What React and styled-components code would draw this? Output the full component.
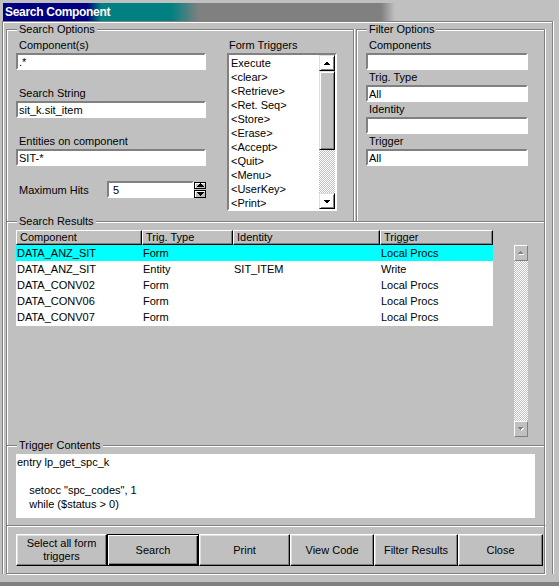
import styled, { createGlobalStyle, css } from "styled-components";

const GlobalStyle = createGlobalStyle`
  * { box-sizing: border-box; }
  html, body { margin: 0; padding: 0; background: #c0c0c0; }
  body {
    font-family: "Liberation Sans", Arial, sans-serif;
    font-size: 11px;
    color: #000;
  }
`;

const raised = css`
  border: 1px solid;
  border-color: #dfdfdf #000 #000 #dfdfdf;
  box-shadow: inset 1px 1px 0 #fff, inset -1px -1px 0 #808080;
`;

const sunken = css`
  border: 2px solid;
  border-color: #808080 #fff #fff #808080;
`;

const dither = css`
  background: repeating-conic-gradient(#fff 0% 25%, #c0c0c0 0% 50%) 0 0 / 2px 2px;
`;

const Window = styled.div`
  width: 559px;
  height: 586px;
  background: #c0c0c0;
  display: flex;
  flex-direction: column;
  overflow: hidden;
`;

const TitleBar = styled.div`
  margin: 3px 0 0 3px;
  width: 392px;
  height: 18px;
  padding-left: 2px;
  background: linear-gradient(
    to right,
    #000080 0 84px,
    #008080 98px 168px,
    #808080 196px 378px,
    #c0c0c0 392px
  );
  color: #fff;
  font-weight: bold;
  font-size: 12px;
  line-height: 19px;
  letter-spacing: -0.3px;
  white-space: nowrap;
`;

const Client = styled.div`
  margin-left: 2px;
  width: 551px;
  border: 1px solid #808080;
  border-bottom: 0;
  box-shadow: inset 1px 1px 0 #fff, 1px 0 0 #fff;
  padding: 1px 7px 0 3px;
`;

const TopRow = styled.div`
  display: flex;
  gap: 2px;
`;

const Group = styled.fieldset`
  margin: ${(p) => (p.$overlap ? "-6px 0 0" : "0")};
  padding: 0;
  min-width: 0;
  width: ${(p) => p.$w}px;
  height: ${(p) => p.$h}px;
  border: 1px solid #808080;
  border-bottom: 0;
  box-shadow: inset 1px 1px 0 #fff, 1px 0 0 #fff;
`;

const Legend = styled.legend`
  margin-left: 10px;
  padding: 0 2px;
  line-height: 13px;
  background: #c0c0c0;
  white-space: nowrap;
`;

const Body = styled.div`
  padding: ${(p) => p.$pt}px 0 0 9px;
  display: flex;
  gap: ${(p) => p.$gap || 0}px;
`;

const Column = styled.div`
  width: ${(p) => p.$w}px;
  display: flex;
  flex-direction: column;
`;

const Label = styled.div`
  height: 13px;
  line-height: 13px;
  padding-left: ${(p) => (p.$pl === undefined ? 3 : p.$pl)}px;
  margin-top: ${(p) => p.$mt || 0}px;
  margin-bottom: 1px;
  white-space: nowrap;
`;

const Input = styled.input`
  display: block;
  width: ${(p) => p.$w || 190}px;
  height: 17px;
  ${sunken}
  background: #fff;
  font: inherit;
  color: #000;
  padding: 0 0 0 ${(p) => p.$pl || 1}px;
  margin: 0;
  outline: none;
`;

const HitsRow = styled.div`
  display: flex;
  align-items: center;
  margin-top: 15px;
  height: 17px;
`;

const HitsLabel = styled.span`
  width: 91px;
  padding-left: 3px;
  white-space: nowrap;
`;

const Spinner = styled.div`
  width: 12px;
  height: 16px;
  display: flex;
  flex-direction: column;
  gap: 1px;
`;

const SpinBtn = styled.div`
  flex: 1;
  border: 1px solid #000;
  background: #c0c0c0;
  box-shadow: inset 1px 1px 0 #fff;
  display: flex;
  align-items: center;
  justify-content: center;
`;

const ListBox = styled.div`
  width: 110px;
  height: 158px;
  ${sunken}
  background: #fff;
  display: flex;
  overflow: hidden;
`;

const ListItems = styled.div`
  flex: 1;
  padding: 1px 0 0 2px;
  line-height: 14px;
  overflow: hidden;
  white-space: nowrap;
`;

const VScroll = styled.div`
  width: ${(p) => p.$w}px;
  height: ${(p) => (p.$h ? `${p.$h}px` : "auto")};
  margin: ${(p) => p.$m || 0};
  flex-shrink: 0;
  display: flex;
  flex-direction: column;
`;

const ScrollBtn = styled.div`
  height: 16px;
  flex-shrink: 0;
  display: flex;
  align-items: center;
  justify-content: center;
  ${(p) =>
    p.$disabled
      ? css`
          border: 1px solid;
          border-color: #fff #808080 #808080 #fff;
          background: #c0c0c0;
        `
      : raised}
`;

const Thumb = styled.div`
  height: ${(p) => p.$h}px;
  flex-shrink: 0;
  background: #c0c0c0;
  ${raised}
`;

const Track = styled.div`
  flex: 1;
  ${dither}
`;

const cols = "126px 91px 147px 113px";

const Table = styled.div`
  width: 477px;
`;

const HeadRow = styled.div`
  display: grid;
  grid-template-columns: ${cols};
  height: 15px;
`;

const HeadCell = styled.div`
  border: 1px solid;
  border-color: #fff #000 #000 #fff;
  box-shadow: inset -1px -1px 0 #808080;
  padding-left: 3px;
  line-height: 13px;
  white-space: nowrap;
`;

const Rows = styled.div`
  background: #fff;
  height: 81px;
`;

const Row = styled.div`
  display: grid;
  grid-template-columns: ${cols};
  height: 16px;
  line-height: 16px;
  background: ${(p) => (p.$sel ? "#00ffff" : "transparent")};
`;

const Cell = styled.div`
  padding-left: 1px;
  white-space: nowrap;
  overflow: hidden;
`;

const CodeBox = styled.div`
  width: 519px;
  height: 64px;
  background: #fff;
  padding: 1px 0 0 1px;
  line-height: 14px;
  white-space: pre;
`;

const ButtonBar = styled.div`
  height: 49px;
  border: 1px solid #808080;
  box-shadow: inset 1px 1px 0 #fff, 1px 1px 0 #fff;
  padding: 8px 0 0 9px;
  display: flex;
`;

const Button = styled.button`
  width: ${(p) => p.$w}px;
  height: 32px;
  margin: 0;
  padding: 0;
  font: inherit;
  line-height: 13px;
  color: #000;
  background: #c0c0c0;
  border: 1px solid;
  border-color: #fff #000 #000 #fff;
  box-shadow: inset -1px -1px 0 #808080, inset 1px 1px 0 #dfdfdf;
  ${(p) =>
    p.$default &&
    css`
      border-color: #000;
      box-shadow: inset 1px 1px 0 #fff, inset -1px -1px 0 #000,
        inset -2px -2px 0 #808080;
    `}
`;

const BottomBand = styled.div`
  margin-top: auto;
  height: 4px;
  background: #808080;
`;

const Arrow = ({ down, disabled }) => (
  <svg width="8" height="5" viewBox="0 0 8 5" shapeRendering="crispEdges">
    {disabled && (
      <polygon
        points={down ? "2,1 7,1 4.5,4" : "2,4 7,4 4.5,1"}
        fill="#fff"
      />
    )}
    <polygon
      points={
        disabled
          ? down
            ? "1,0 6,0 3.5,3"
            : "1,3 6,3 3.5,0"
          : down
          ? "0,1 7,1 3.5,4.5"
          : "0,4 7,4 3.5,0.5"
      }
      fill={disabled ? "#808080" : "#000"}
    />
  </svg>
);

const SpinArrow = ({ down }) => (
  <svg width="7" height="4" viewBox="0 0 7 4" shapeRendering="crispEdges">
    <polygon points={down ? "0,0 7,0 3.5,4" : "0,4 7,4 3.5,0"} fill="#000" />
  </svg>
);

const triggers = [
  "Execute",
  "<clear>",
  "<Retrieve>",
  "<Ret. Seq>",
  "<Store>",
  "<Erase>",
  "<Accept>",
  "<Quit>",
  "<Menu>",
  "<UserKey>",
  "<Print>",
];

const results = [
  ["DATA_ANZ_SIT", "Form", "", "Local Procs"],
  ["DATA_ANZ_SIT", "Entity", "SIT_ITEM", "Write"],
  ["DATA_CONV02", "Form", "", "Local Procs"],
  ["DATA_CONV06", "Form", "", "Local Procs"],
  ["DATA_CONV07", "Form", "", "Local Procs"],
];

const code = [
  "entry lp_get_spc_k",
  "",
  '    setocc "spc_codes", 1',
  "    while ($status > 0)",
];

const buttons = [
  { w: 91, label: "Select all form triggers" },
  { w: 92, label: "Search", def: true },
  { w: 91, label: "Print" },
  { w: 84, label: "View Code" },
  { w: 84, label: "Filter Results" },
  { w: 85, label: "Close" },
];

const App = () => {
  return (
    <Window>
      <GlobalStyle />
      <TitleBar>Search Component</TitleBar>
      <Client>
        <TopRow>
          <Group $w={348} $h={198}>
            <Legend>Search Options</Legend>
            <Body $pt={3} $gap={21}>
              <Column $w={190}>
                <Label>Component(s)</Label>
                <Input readOnly value=".*" />
                <Label $mt={17}>Search String</Label>
                <Input readOnly value="sit_k.sit_item" />
                <Label $mt={17}>Entities on component</Label>
                <Input readOnly value="SIT-*" />
                <HitsRow>
                  <HitsLabel>Maximum Hits</HitsLabel>
                  <Input readOnly value="5" $w={87} $pl={4} />
                  <Spinner>
                    <SpinBtn>
                      <SpinArrow />
                    </SpinBtn>
                    <SpinBtn>
                      <SpinArrow down />
                    </SpinBtn>
                  </Spinner>
                </HitsRow>
              </Column>
              <Column $w={110}>
                <Label $pl={2}>Form Triggers</Label>
                <ListBox>
                  <ListItems>
                    {triggers.map((t) => (
                      <div key={t}>{t}</div>
                    ))}
                  </ListItems>
                  <VScroll $w={16}>
                    <ScrollBtn>
                      <Arrow />
                    </ScrollBtn>
                    <Thumb $h={79} />
                    <Track />
                    <ScrollBtn>
                      <Arrow down />
                    </ScrollBtn>
                  </VScroll>
                </ListBox>
              </Column>
            </Body>
          </Group>
          <Group $w={189} $h={198}>
            <Legend>Filter Options</Legend>
            <Body $pt={3}>
              <Column $w={162}>
                <Label>Components</Label>
                <Input readOnly value="" $w={162} />
                <Label $mt={1}>Trig. Type</Label>
                <Input readOnly value="All" $w={162} />
                <Label $mt={1}>Identity</Label>
                <Input readOnly value="" $w={162} />
                <Label $mt={1}>Trigger</Label>
                <Input readOnly value="All" $w={162} />
              </Column>
            </Body>
          </Group>
        </TopRow>

        <Group $w={539} $h={230} $overlap>
          <Legend>Search Results</Legend>
          <Body $pt={2}>
            <Table>
              <HeadRow>
                <HeadCell>Component</HeadCell>
                <HeadCell>Trig. Type</HeadCell>
                <HeadCell>Identity</HeadCell>
                <HeadCell>Trigger</HeadCell>
              </HeadRow>
              <Rows>
                {results.map((r, i) => (
                  <Row key={i} $sel={i === 0}>
                    {r.map((c, j) => (
                      <Cell key={j}>{c}</Cell>
                    ))}
                  </Row>
                ))}
              </Rows>
            </Table>
            <VScroll $w={14} $h={192} $m="15px 0 0 21px">
              <ScrollBtn $disabled>
                <Arrow disabled />
              </ScrollBtn>
              <Track />
              <ScrollBtn $disabled>
                <Arrow down disabled />
              </ScrollBtn>
            </VScroll>
          </Body>
        </Group>

        <Group $w={539} $h={86} $overlap>
          <Legend>Trigger Contents</Legend>
          <Body $pt={2}>
            <CodeBox>
              {code.map((line, i) => (
                <div key={i}>{line || " "}</div>
              ))}
            </CodeBox>
          </Body>
        </Group>

        <ButtonBar>
          {buttons.map((b) => (
            <Button key={b.label} $w={b.w} $default={b.def}>
              {b.label}
            </Button>
          ))}
        </ButtonBar>
      </Client>
      <BottomBand />
    </Window>
  );
};

export default App;
